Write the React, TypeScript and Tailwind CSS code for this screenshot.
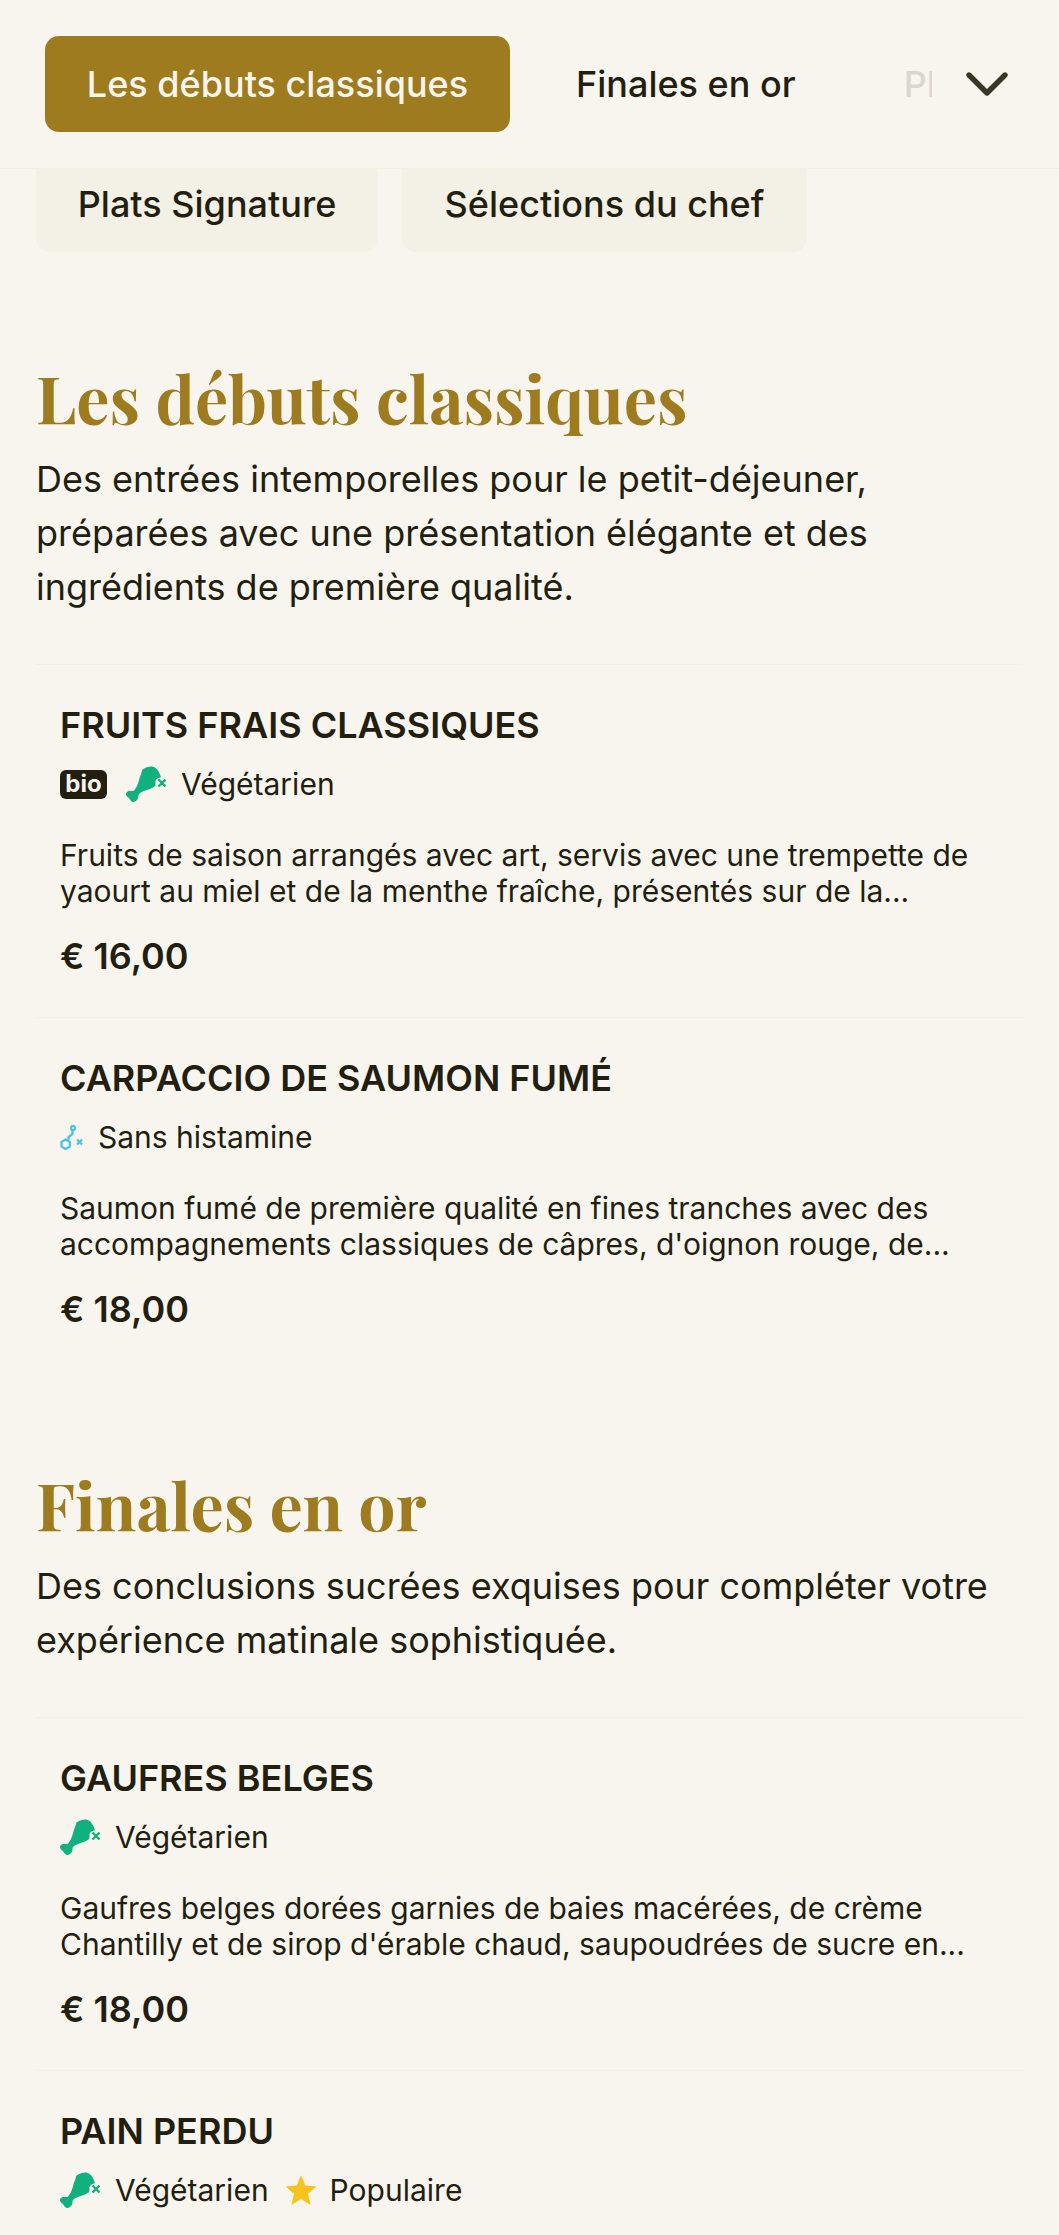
import { ChevronDown } from 'lucide-react';
import type { ReactNode } from 'react';

const serif = "font-['Playfair_Display','Liberation_Serif',serif]";

function Leg() {
  return (
    <svg viewBox="0 0 40 36" className="h-[36px] w-[40px] shrink-0" fill="#10b07f">
      <path d="M16.500 3.500C20 1.500 24 0 27 .8c3.500 1 6.500 5 8 10.500-2.500.6-5 1.700-5.500 3.700-.3 2 .5 3.500-.5 5-3 2.500-7.500 3.500-11 5-2.500 1-4.500 2-5.300 3.500-.6 1.500 0 3-.8 4.300C10.800 34.500 9 36 7.300 36c-1.800 0-2.800-1.500-3.800-3.200C2.500 31.500.3 30.500 0 28.500c-.2-2 1.500-3.500 3.300-3.600 1.500-.1 3 .4 4 0 2-1.200 3.300-4 4.400-6.600 1.300-3.300 1.800-7.500 3.300-10 .5-1.500 1-3.500 1.500-4.800z" />
      <path d="M32.500 13.500l7 7M39.500 13.500l-7 7" stroke="#10b07f" strokeWidth="2.400" fill="none" />
    </svg>
  );
}

function Histamine() {
  return (
    <svg viewBox="0 0 22 25" className="h-[25px] w-[23px] shrink-0" fill="none" stroke="#45c3e6" strokeWidth="2.200">
      <path d="M5 14.500l4.300 2.400v4.700L5 24l-4-2.400v-4.700z" />
      <path d="M8 15V12l4-3V5.500" />
      <circle cx="12.500" cy="3" r="2" />
      <path d="M16.500 14.500l5 5M21.500 14.500l-5 5" />
    </svg>
  );
}

function Dish({ name, desc, price, tags }: { name: string; desc: string; price: string; tags: ReactNode }) {
  return (
    <div className="border-t border-[#f1efe9] px-6 pt-[40px] pb-[39px]">
      <h3 className="text-[36px] leading-[40px] font-semibold text-[#231f10]">{name}</h3>
      <div className="mt-[19px] flex h-[40px] items-center gap-[15px] text-[30px] text-[#231f10]">{tags}</div>
      <p className="mt-[33px] text-[30px] leading-[36px] text-[#231f10]">{desc}</p>
      <p className="mt-[25px] text-[36px] leading-[44px] font-semibold text-[#231f10]">{price}</p>
    </div>
  );
}

export default function App() {
  return (
    <div className="h-[2235px] overflow-hidden bg-[#f8f5ef] font-['Inter',sans-serif]">
      <div className="flex h-[169px] items-center border-b border-[#f1efe9] pr-[36px] pl-[45px]">
        <div className="flex h-[96px] w-[465px] items-center justify-center rounded-[14px] bg-[#9e7b1f] text-[36px] font-medium text-[#f8f5ef]">
          Les débuts classiques
        </div>
        <div className="ml-[66px] text-[36px] font-medium text-[#231f10]">Finales en or</div>
        <div className="ml-[108px] w-[28px] overflow-hidden text-[36px] font-medium text-[#d9d7d0]">Plats</div>
        <ChevronDown className="ml-auto h-[72px] w-[72px] text-[#3a3626]" strokeWidth={1.8} />
      </div>
      <div className="flex gap-[24px] px-9">
        <div className="flex h-[83px] w-[342px] items-start justify-center rounded-b-[14px] bg-[#f3f0e6] pt-[14px] text-[36px] leading-[42px] font-medium text-[#231f10]">
          Plats Signature
        </div>
        <div className="flex h-[83px] w-[405px] items-start justify-center rounded-b-[14px] bg-[#f3f0e6] pt-[14px] text-[36px] leading-[42px] font-medium text-[#231f10]">
          Sélections du chef
        </div>
      </div>
      <section className="mt-[105px] px-9">
        <h2 className={`${serif} text-[66px] leading-[80px] font-bold text-[#9e7b1f]`}>Les débuts classiques</h2>
        <p className="mt-[15px] text-[36px] leading-[54px] text-[#231f10]">
          Des entrées intemporelles pour le petit-déjeuner, préparées avec une présentation élégante et des ingrédients de première qualité.
        </p>
        <div className="mt-[50px]">
          <Dish
            name="FRUITS FRAIS CLASSIQUES"
            desc="Fruits de saison arrangés avec art, servis avec une trempette de yaourt au miel et de la menthe fraîche, présentés sur de la..."
            price="€ 16,00"
            tags={
              <>
                <span className="mr-[4px] flex h-[29px] w-[47px] items-center justify-center rounded-[6px] bg-[#231f10] text-[24px] font-bold text-[#f8f5ef]">bio</span>
                <Leg />
                <span>Végétarien</span>
              </>
            }
          />
          <Dish
            name="CARPACCIO DE SAUMON FUMÉ"
            desc="Saumon fumé de première qualité en fines tranches avec des accompagnements classiques de câpres, d'oignon rouge, de..."
            price="€ 18,00"
            tags={
              <>
                <Histamine />
                <span>Sans histamine</span>
              </>
            }
          />
        </div>
      </section>
      <section className="mt-[94px] px-9">
        <h2 className={`${serif} text-[66px] leading-[80px] font-bold text-[#9e7b1f]`}>Finales en or</h2>
        <p className="mt-[15px] text-[36px] leading-[54px] text-[#231f10]">
          Des conclusions sucrées exquises pour compléter votre expérience matinale sophistiquée.
        </p>
        <div className="mt-[50px]">
          <Dish
            name="GAUFRES BELGES"
            desc="Gaufres belges dorées garnies de baies macérées, de crème Chantilly et de sirop d'érable chaud, saupoudrées de sucre en..."
            price="€ 18,00"
            tags={
              <>
                <Leg />
                <span>Végétarien</span>
              </>
            }
          />
          <Dish
            name="PAIN PERDU"
            desc=""
            price=""
            tags={
              <>
                <Leg />
                <span>Végétarien</span>
                <svg viewBox="0 0 24 24" className="mr-[-3px] h-[34px] w-[34px] shrink-0" fill="#f7c31c">
                  <path d="M12 1.500l3.100 7.300 7.900.7-6 5.200 1.800 7.800L12 18.400l-6.800 4.100 1.800-7.800-6-5.200 7.900-.7z" />
                </svg>
                <span>Populaire</span>
              </>
            }
          />
        </div>
      </section>
    </div>
  );
}
